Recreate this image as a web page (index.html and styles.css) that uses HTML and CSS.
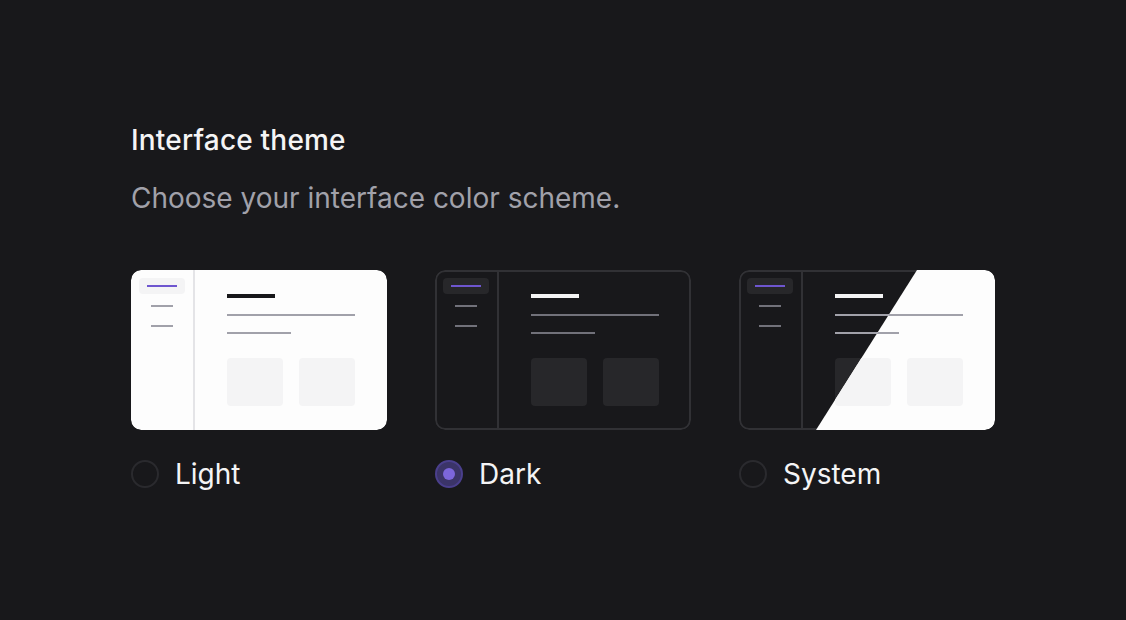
FILE: index.html
```html
<!DOCTYPE html>
<html lang="en">
<head>
<meta charset="utf-8">
<title>Interface theme</title>
<link rel="stylesheet" href="styles.css">
</head>
<body>
<main class="page">
  <h1 class="title">Interface theme</h1>
  <p class="subtitle">Choose your interface color scheme.</p>
  <div class="options">
    <label class="option">
      <div class="card card-light">
        <div class="mock">
          <div class="side"><div class="nav-active"><span></span></div><span class="nav-line"></span><span class="nav-line"></span></div>
          <div class="content"><span class="bar"></span><span class="line long"></span><span class="line short"></span><div class="boxes"><span></span><span></span></div></div>
        </div>
      </div>
      <div class="choice"><span class="radio"></span><span class="label">Light</span></div>
    </label>
    <label class="option">
      <div class="card card-dark">
        <div class="mock">
          <div class="side"><div class="nav-active"><span></span></div><span class="nav-line"></span><span class="nav-line"></span></div>
          <div class="content"><span class="bar"></span><span class="line long"></span><span class="line short"></span><div class="boxes"><span></span><span></span></div></div>
        </div>
      </div>
      <div class="choice"><span class="radio checked"></span><span class="label">Dark</span></div>
    </label>
    <label class="option">
      <div class="card card-dark card-system">
        <div class="mock">
          <div class="side"><div class="nav-active"><span></span></div><span class="nav-line"></span><span class="nav-line"></span></div>
          <div class="content"><span class="bar"></span><span class="line long"></span><span class="line short"></span><div class="boxes"><span></span><span></span></div></div>
        </div>
        <div class="mock mock-light-half">
          <div class="side"><div class="nav-active"><span></span></div><span class="nav-line"></span><span class="nav-line"></span></div>
          <div class="content"><span class="bar"></span><span class="line long"></span><span class="line short"></span><div class="boxes"><span></span><span></span></div></div>
        </div>
      </div>
      <div class="choice"><span class="radio"></span><span class="label">System</span></div>
    </label>
  </div>
</main>
</body>
</html>
```

FILE: styles.css
```css
* { box-sizing: border-box; }
html, body { margin: 0; padding: 0; }
body {
  background: #18181b;
  font-family: Inter, "Noto Sans", sans-serif;
  color: #f4f4f5;
  width: 1126px;
  height: 620px;
  overflow: hidden;
}
.page {
  padding: 124px 0 0 131px;
}
.title {
  margin: 0;
  font-size: 28px;
  line-height: 32px;
  font-weight: 500;
  letter-spacing: 0.2px;
  color: #f4f4f5;
}
.subtitle {
  margin: 26px 0 0;
  font-size: 28px;
  line-height: 32px;
  font-weight: 400;
  color: #a1a1aa;
}
.options {
  display: flex;
  gap: 48px;
  margin-top: 56px;
}
.option {
  display: flex;
  flex-direction: column;
  gap: 30px;
  cursor: pointer;
}
.card {
  position: relative;
  width: 256px;
  height: 160px;
  border-radius: 10px;
  overflow: hidden;
}
.mock {
  display: flex;
  width: 256px;
  height: 160px;
  border-radius: 10px;
}
.side {
  width: 64px;
  padding: 8px 8px 0;
  border-right: 2px solid #e4e4e7;
  display: flex;
  flex-direction: column;
  align-items: center;
}
.nav-active {
  width: 46px;
  height: 16px;
  border-radius: 4px;
  background: #f4f4f5;
  display: flex;
  align-items: center;
  justify-content: center;
}
.nav-active span {
  width: 30px;
  height: 2px;
  background: #6e56cf;
}
.nav-line {
  width: 22px;
  height: 2px;
  background: #a1a1aa;
  margin-top: 11px;
}
.nav-line + .nav-line { margin-top: 18px; }
.content {
  flex: 1;
  padding: 24px 32px 0;
  display: flex;
  flex-direction: column;
  align-items: flex-start;
}
.bar {
  width: 48px;
  height: 4px;
  background: #18181b;
}
.line {
  height: 2px;
  background: #a1a1aa;
  margin-top: 16px;
}
.line.long { width: 128px; }
.line.short { width: 64px; }
.boxes {
  display: flex;
  gap: 16px;
  margin-top: 24px;
}
.boxes span {
  width: 56px;
  height: 48px;
  border-radius: 4px;
  background: #f4f4f5;
}

.card-light .mock { background: #fdfdfd; }

.card-dark .mock {
  background: #18181b;
  box-shadow: inset 0 0 0 2px #313135;
}
.card-dark .side { border-right-color: #313135; }
.card-dark .nav-active { background: #27272a; }
.card-dark .nav-line,
.card-dark .line { background: #71717a; }
.card-dark .bar { background: #f4f4f5; }
.card-dark .boxes span { background: #27272a; }

.card-system .mock .line { background: #a1a1aa; }
.card-system .mock .nav-line { background: #71717a; }

.card-system .mock-light-half {
  position: absolute;
  inset: 0;
  background: #fdfdfd;
  box-shadow: none;
  clip-path: polygon(178px 0, 100% 0, 100% 100%, 77px 100%);
}
.card-system .mock-light-half .side { border-right-color: #e4e4e7; }
.card-system .mock-light-half .nav-active { background: #f4f4f5; }
.card-system .mock-light-half .bar { background: #18181b; }
.card-system .mock-light-half .boxes span { background: #f4f4f5; }

.choice {
  display: flex;
  align-items: center;
  gap: 16px;
}
.radio {
  width: 28px;
  height: 28px;
  border-radius: 50%;
  border: 2px solid #2a2a2e;
  background: #18181b;
  display: flex;
  align-items: center;
  justify-content: center;
  flex: none;
}
.radio.checked {
  border-color: #4a3f8c;
  background: #3b3468;
}
.radio.checked::after {
  content: "";
  width: 12px;
  height: 12px;
  border-radius: 50%;
  background: #7c66dc;
}
.label {
  font-size: 28px;
  line-height: 28px;
  color: #f4f4f5;
}
```
